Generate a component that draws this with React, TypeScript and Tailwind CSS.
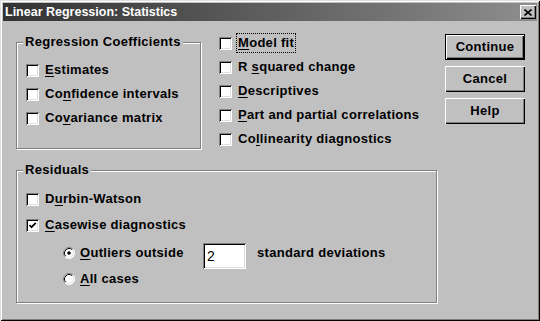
import React from "react";

function Label({ text, u }: { text: string; u: number }) {
  return (
    <span className="whitespace-nowrap">
      {text.slice(0, u)}
      <span className="underline decoration-1 underline-offset-[2px]">{text[u]}</span>
      {text.slice(u + 1)}
    </span>
  );
}

function CheckBox({ checked = false }: { checked?: boolean }) {
  return (
    <span className="flex w-[13px] h-[13px] shrink-0 items-center justify-center bg-white shadow-[inset_1px_1px_0_#808080,inset_-1px_-1px_0_#ffffff,inset_2px_2px_0_#000000,inset_-2px_-2px_0_#dfdfdf]">
      {checked && (
        <svg width="9" height="9" viewBox="0 0 9 9">
          <polyline points="1.5,4 3.5,6.2 7.8,1.8" fill="none" stroke="#000" strokeWidth="1.7" />
        </svg>
      )}
    </span>
  );
}

function Radio({ checked = false }: { checked?: boolean }) {
  return (
    <svg width="12" height="12" viewBox="0 0 12 12" className="shrink-0">
      <circle cx="6" cy="6" r="5.5" fill="#fff" />
      <path d="M2.11 9.89 A5.5 5.5 0 0 1 9.89 2.11" fill="none" stroke="#808080" strokeWidth="1" />
      <path d="M9.89 2.11 A5.5 5.5 0 0 1 2.11 9.89" fill="none" stroke="#fff" strokeWidth="1" />
      <path d="M2.82 9.18 A4.5 4.5 0 0 1 9.18 2.82" fill="none" stroke="#000" strokeWidth="1" />
      <path d="M9.18 2.82 A4.5 4.5 0 0 1 2.82 9.18" fill="none" stroke="#dfdfdf" strokeWidth="1" />
      {checked && <circle cx="6" cy="6" r="1.8" fill="#000" />}
    </svg>
  );
}

function CheckRow({ text, u, checked, focus }: { text: string; u: number; checked?: boolean; focus?: boolean }) {
  return (
    <div className="flex h-[24px] items-center gap-[6px]">
      <CheckBox checked={checked} />
      {focus ? (
        <span className="-ml-[2px] border border-dotted border-black px-[1px] py-[1px] leading-[16px]">
          <Label text={text} u={u} />
        </span>
      ) : (
        <Label text={text} u={u} />
      )}
    </div>
  );
}

function Button({ children, isDefault }: { children: React.ReactNode; isDefault?: boolean }) {
  return (
    <button
      className={
        isDefault
          ? "flex h-[26px] w-[80px] items-center justify-center border border-black bg-[#c0c0c0] shadow-[inset_1px_1px_0_#ffffff,inset_-1px_-1px_0_#000000,inset_-2px_-2px_0_#808080]"
          : "flex h-[26px] w-[80px] items-center justify-center bg-[#c0c0c0] shadow-[inset_1px_1px_0_#ffffff,inset_-1px_-1px_0_#000000,inset_-2px_-2px_0_#808080]"
      }
    >
      {children}
    </button>
  );
}

export default function App() {
  return (
    <div className="flex h-[321px] w-[540px] flex-col bg-[#c0c0c0] p-[3px] font-['Liberation_Sans',Arial,sans-serif] text-[13px] font-bold tracking-[0.3px] text-black shadow-[inset_1px_1px_0_#dfdfdf,inset_-1px_-1px_0_#000000,inset_2px_2px_0_#ffffff,inset_-2px_-2px_0_#808080]">
      {/* title bar */}
      <div className="flex h-[18px] items-center justify-between bg-linear-to-r from-[#333333] to-[#8e8e8e] pl-[2px] pr-[1px]">
        <span className="text-[12.5px] leading-[18px] tracking-normal text-white">Linear Regression: Statistics</span>
        <span className="flex h-[14px] w-[16px] items-center justify-center bg-[#c0c0c0] shadow-[inset_1px_1px_0_#ffffff,inset_-1px_-1px_0_#000000,inset_-2px_-2px_0_#808080]">
          <svg width="8" height="7" viewBox="0 0 8 7">
            <path d="M0.5 0.5 L7.5 6.5 M7.5 0.5 L0.5 6.5" stroke="#000" strokeWidth="1.6" />
          </svg>
        </span>
      </div>

      {/* top row */}
      <div className="flex h-[128px] items-start">
        <div className="relative ml-[13px] mt-[21px] h-[107px] w-[185px] border border-[#808080] pl-[9px] pt-[15px] shadow-[inset_1px_1px_0_#ffffff,1px_1px_0_#ffffff]">
          <span className="absolute -top-[9px] left-[6px] bg-[#c0c0c0] px-[2px] leading-[16px]">Regression Coefficients</span>
          <CheckRow text="Estimates" u={0} />
          <CheckRow text="Confidence intervals" u={2} />
          <CheckRow text="Covariance matrix" u={2} />
        </div>

        <div className="ml-[18px] mt-[10px] w-[226px]">
          <CheckRow text="Model fit" u={0} focus />
          <CheckRow text="R squared change" u={2} />
          <CheckRow text="Descriptives" u={0} />
          <CheckRow text="Part and partial correlations" u={0} />
          <CheckRow text="Collinearity diagnostics" u={2} />
        </div>

        <div className="mt-[13px] flex flex-col gap-[6px]">
          <Button isDefault>Continue</Button>
          <Button>Cancel</Button>
          <Button>Help</Button>
        </div>
      </div>

      {/* residuals */}
      <div className="relative ml-[13px] mt-[21px] h-[133px] w-[421px] border border-[#808080] pl-[9px] pt-[15px] shadow-[inset_1px_1px_0_#ffffff,1px_1px_0_#ffffff]">
        <span className="absolute -top-[9px] left-[6px] bg-[#c0c0c0] px-[2px] leading-[16px]">Residuals</span>
        <div className="flex h-[26px] items-center gap-[6px]">
          <CheckBox />
          <Label text="Durbin-Watson" u={1} />
        </div>
        <div className="flex h-[26px] items-center gap-[6px]">
          <CheckBox checked />
          <Label text="Casewise diagnostics" u={0} />
        </div>
        <div className="flex h-[30px] items-center pl-[37px]">
          <Radio checked />
          <span className="ml-[5px] w-[123px]">
            <Label text="Outliers outside" u={0} />
          </span>
          <span className="mt-[6px] flex h-[26px] w-[43px] items-center bg-white pl-[4px] text-[14px] font-normal shadow-[inset_1px_1px_0_#808080,inset_-1px_-1px_0_#ffffff,inset_2px_2px_0_#000000,inset_-2px_-2px_0_#dfdfdf]">
            2
          </span>
          <span className="ml-[11px]">standard deviations</span>
        </div>
        <div className="flex h-[22px] items-center gap-[5px] pl-[37px]">
          <Radio />
          <Label text="All cases" u={0} />
        </div>
      </div>
    </div>
  );
}
